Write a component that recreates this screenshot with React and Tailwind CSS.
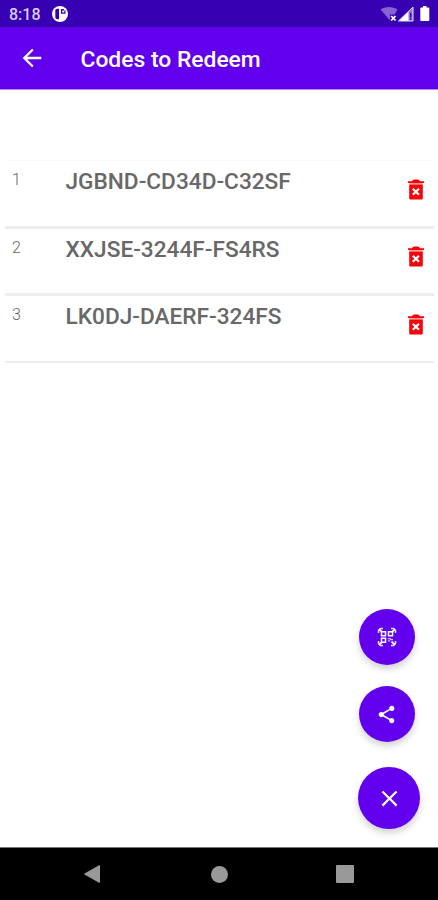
import React, { useState } from 'react';
import { MdArrowBack, MdClose, MdShare } from 'react-icons/md';

const initialCodes = ['JGBND-CD34D-C32SF', 'XXJSE-3244F-FS4RS', 'LK0DJ-DAERF-324FS'];

function StatusBar() {
  return (
    <div className="h-[27px] shrink-0 bg-[#3700b3] text-white flex items-center justify-between pl-[9px] pr-[8px]">
      <div className="flex items-center gap-[12px]">
        <span className="w-[31px] pt-[2px] text-[16px] leading-[25px] font-medium text-[#d9cdf5] whitespace-nowrap">8:18</span>
        <svg className="w-4 h-4" viewBox="0 0 16 16">
          <circle cx="8" cy="8" r="8" fill="#fff" />
          <path d="M7 2.7H5.2C3.9 2.7 3.3 3.6 3.3 5v6c0 1.4.7 2.2 2 2.2H7z" fill="#3700b3" />
          <path d="M9 3h3v1.500h1.500v3.300H9z" fill="#3700b3" />
          <rect x="10.300" y="4.500" width="2" height="2" fill="#fff" />
        </svg>
      </div>
      <svg className="w-[50px] h-[18px]" viewBox="0 0 50 18">
        <path d="M0.500 4.500C4.500 1 13.500 1 17.500 4.500L14.500 9.500H10V15.500z" fill="#8762d3" />
        <path d="M11.200 11l4.300 4.500M15.500 11l-4.300 4.500" stroke="#fff" strokeWidth="1.800" />
        <path d="M33 2v14H18.500z" fill="#8f72d6" />
        <path d="M28.500 6.500V16h-10z" fill="#fff" />
        <path d="M33 2v14H18.500z" fill="none" stroke="#e5dcf8" strokeWidth="1" />
        <path d="M30.700 8v4.500M30.700 13.500v1.500" stroke="#3700b3" strokeWidth="1.500" />
        <path d="M43 1h3.500v1.500H48c.8 0 1.300.5 1.300 1.300V15c0 .7-.3 1-1 1h-7c-.7 0-1-.3-1-1V3.800c0-.8.500-1.300 1.200-1.300H43z" fill="#fff" />
      </svg>
    </div>
  );
}

function TrashIcon({ className }) {
  return (
    <svg className={className} viewBox="0 0 18 22">
      <path d="M5 2.200C5.500 1 7 .6 9 .6s3.500.4 4 1.600h4V4H1V2.200z" fill="currentColor" />
      <path d="M2.200 4h13.600v1.500H2.200z" fill="#ff9a9a" />
      <path d="M2.200 5.500h13.600V19c0 1-.6 1.600-1.600 1.600H3.800c-1 0-1.600-.6-1.600-1.600z" fill="currentColor" />
      <path d="M5.800 9.700l6.200 6M12 9.700l-6.200 6" stroke="#fff" strokeWidth="2.200" />
    </svg>
  );
}

function ScanIcon({ className }) {
  return (
    <svg className={className} viewBox="0 0 20 20" fill="none" stroke="currentColor">
      {/* scanner corners */}
      <path
        d="M1.500 6V3.500l2-2H6M14 1.500h2.500l2 2V6M6 18.500H3.500l-2-2V14M18.500 14v2.500l-2 2H14"
        strokeWidth="1.500"
        opacity="0.85"
      />
      <path d="M2 2l3 3M18 2l-3 3M2 18l3-3M18 18l-3.500-3.500" strokeWidth="1.800" opacity="0.9" />
      <path d="M4.500 4.800h4v4h-4zM11.500 4.800h4v4h-4zM4.500 11.300h4v4h-4z" strokeWidth="1.500" />
      <path d="M10.800 11.700h3M13 12.700h3M11 13.900h2" strokeWidth="1.200" opacity="0.75" />
    </svg>
  );
}

function Fab({ size = 'small', children, ...props }) {
  return (
    <button
      className={`rounded-full bg-[#6200ee] text-white flex items-center justify-center shadow-[0_4px_7px_rgba(0,0,0,0.18)] ${
        size === 'large' ? 'w-[62px] h-[62px]' : 'w-[56px] h-[56px] mr-[5px]'
      }`}
      {...props}
    >
      {children}
    </button>
  );
}

function CodeRow({ number, code, onDelete }) {
  return (
    <li className="h-[67.500px] last:h-[66.500px] border-b-[3px] last:border-b-2 border-[#eeeeee] flex items-start pl-[7px] pr-[9px]">
      <span className="w-[53.500px] pt-[9px] text-[16px] leading-[20px] font-light text-[#666666]">{number}</span>
      <span className="flex-1 pt-[7px] text-[22.650px] leading-[28px] font-medium text-[#686868] whitespace-nowrap">{code}</span>
      <button onClick={onDelete} className="mt-[17.500px] text-[#fa0008]">
        <TrashIcon className="w-[18px] h-[22px]" />
      </button>
    </li>
  );
}

export default function App() {
  const [codes, setCodes] = useState(initialCodes);

  const handleDelete = (code) => {
    setCodes((prev) => prev.filter((c) => c !== code));
  };

  return (
    <div className="w-full h-[900px] flex flex-col overflow-hidden bg-white font-[Roboto,sans-serif]">
      <StatusBar />

      <header className="h-[63px] shrink-0 bg-[#6200ee] border-b border-[#b78df5] text-white flex items-center pl-[18px]">
        <MdArrowBack className="w-[28px] h-[28px] shrink-0" />
        <h1 className="pl-[34.500px] pt-[5px] text-[22.850px] font-medium whitespace-nowrap">Codes to Redeem</h1>
      </header>

      <main className="flex-1 flex flex-col justify-between">
        <ul className="mt-[70px] ml-[5px] mr-[4px] border-t border-[#fafafa]">
          {codes.map((code, i) => (
            <CodeRow key={code} number={i + 1} code={code} onDelete={() => handleDelete(code)} />
          ))}
        </ul>

        {/* Floating actions */}
        <div className="flex flex-col items-end pr-[18px] pb-[18px]">
          <Fab aria-label="Scan code">
            <ScanIcon className="w-[20px] h-[20px]" />
          </Fab>
          <div className="pt-[21px] pb-[25px]">
            <Fab aria-label="Share">
              <MdShare className="w-[21px] h-[21px] mr-[2px]" />
            </Fab>
          </div>
          <Fab size="large" aria-label="Close">
            <MdClose className="w-[27px] h-[27px]" />
          </Fab>
        </div>
      </main>

      {/* Android navigation bar */}
      <nav className="h-[53px] shrink-0 bg-black border-t border-[#777777] flex items-center justify-between pl-[83px] pr-[84px] text-[#999999]">
        <svg className="w-[18px] h-[20px]" viewBox="0 0 18 20">
          <path d="M1.500 10L16.500 1.500v17z" fill="currentColor" stroke="currentColor" strokeLinejoin="round" />
        </svg>
        <div className="w-[17px] h-[17px] ml-[2px] rounded-full bg-[#999999]" />
        <div className="w-[18px] h-[18px] rounded-[1px] bg-[#999999]" />
      </nav>
    </div>
  );
}
